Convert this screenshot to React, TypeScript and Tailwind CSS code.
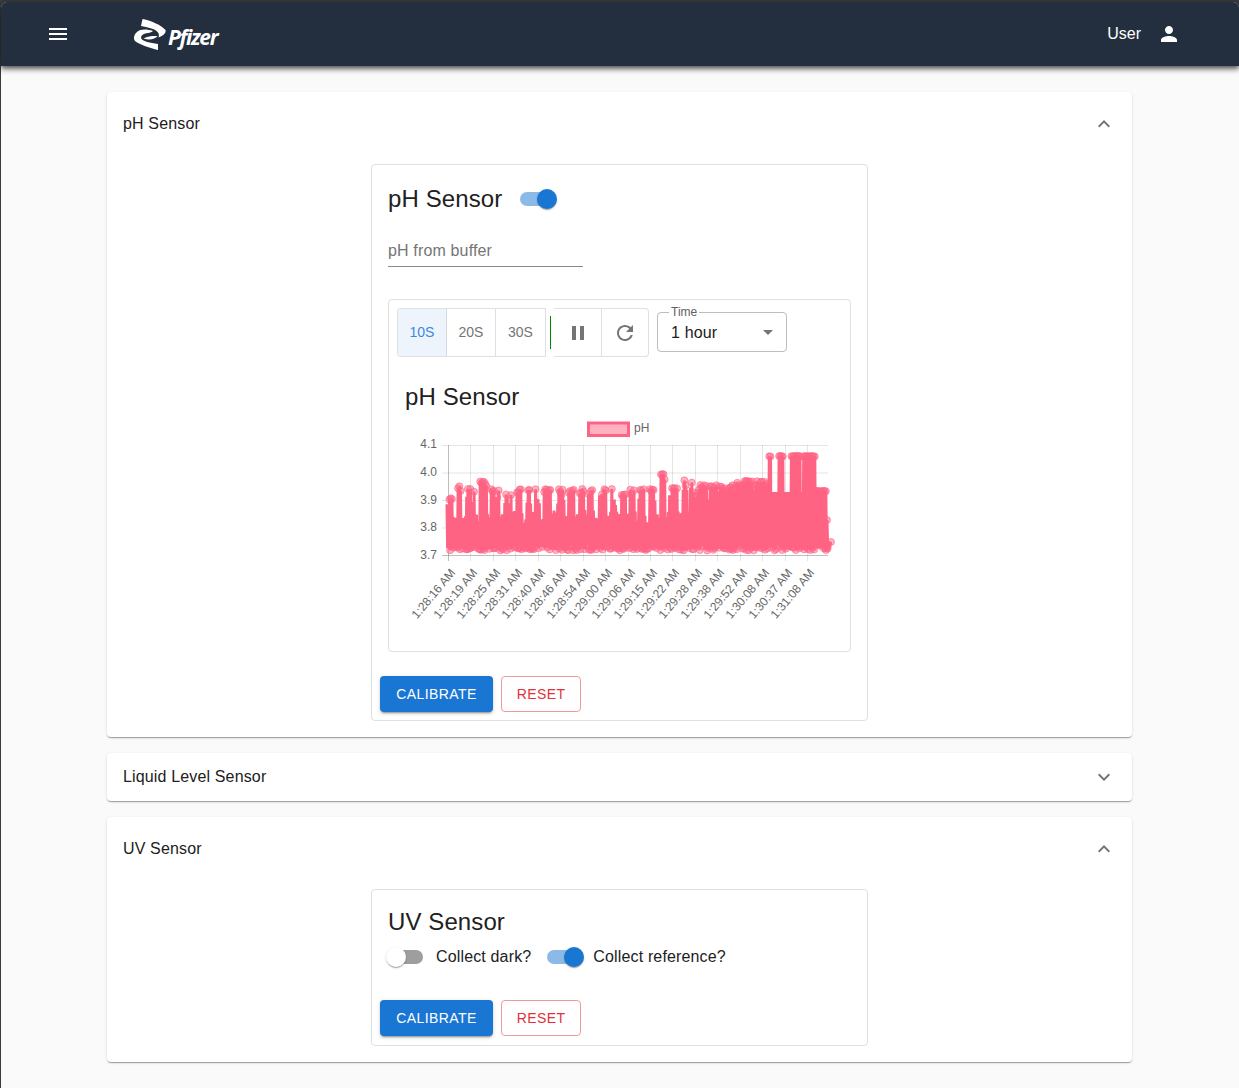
import React from "react";

const Icon = ({ d, className }: { d: string; className?: string }) => (
  <svg viewBox="0 0 24 24" className={className} fill="currentColor" aria-hidden="true">
    <path d={d} />
  </svg>
);

const MENU = "M3 18h18v-2H3v2zm0-5h18v-2H3v2zm0-7v2h18V6H3z";
const PERSON = "M12 12c2.21 0 4-1.79 4-4s-1.79-4-4-4-4 1.79-4 4 1.79 4 4 4zm0 2c-2.67 0-8 1.34-8 4v2h16v-2c0-2.66-5.33-4-8-4z";
const MORE = "M16.59 8.59L12 13.17 7.41 8.59 6 10l6 6 6-6z";
const LESS = "M12 8l-6 6 1.41 1.41L12 10.83l4.59 4.58L18 14z";
const PAUSE = "M6 19h4V5H6v14zm8-14v14h4V5h-4z";
const REFRESH = "M17.65 6.35C16.2 4.9 14.21 4 12 4c-4.42 0-7.99 3.58-7.99 8s3.57 8 7.99 8c3.73 0 6.84-2.55 7.73-6h-2.08c-.82 2.33-3.04 4-5.65 4-3.31 0-6-2.69-6-6s2.69-6 6-6c1.66 0 3.14.69 4.22 1.78L13 11h7V4l-2.35 2.35z";
const ARROW = "M7 10l5 5 5-5z";

const Switch = ({ on }: { on: boolean }) => (
  <span className="relative block w-[58px] h-[38px] shrink-0">
    <span className={`absolute left-[12px] top-[12px] w-[34px] h-[14px] rounded-[7px] ${on ? "bg-[#8cbae8]" : "bg-[#9e9e9e]"}`} />
    <span
      className={`absolute top-[9px] w-[20px] h-[20px] rounded-full shadow-[0_2px_1px_-1px_rgba(0,0,0,0.2),0_1px_1px_0_rgba(0,0,0,0.14),0_1px_3px_0_rgba(0,0,0,0.12)] ${
        on ? "left-[29px] bg-[#1976d2]" : "left-[9px] bg-white"
      }`}
    />
  </span>
);

const Actions = () => (
  <div className="flex gap-2 ml-[-8px]">
    <button className="w-[113px] h-[36px] rounded bg-[#1976d2] text-white text-sm tracking-[0.4px] shadow-[0_3px_1px_-2px_rgba(0,0,0,0.2),0_2px_2px_0_rgba(0,0,0,0.14),0_1px_5px_0_rgba(0,0,0,0.12)]">
      CALIBRATE
    </button>
    <button className="w-[80px] h-[36px] rounded border border-[#ef9a9a] text-[#e0323a] text-sm tracking-[0.4px]">
      RESET
    </button>
  </div>
);

const Accordion = ({ title, open, children }: { title: string; open: boolean; children?: React.ReactNode }) => (
  <section className="bg-white rounded shadow-[0_2px_1px_-1px_rgba(0,0,0,0.2),0_1px_1px_0_rgba(0,0,0,0.14),0_1px_3px_0_rgba(0,0,0,0.12)]">
    <div className={`flex items-center justify-between px-4 ${open ? "h-[64px]" : "h-[48px]"}`}>
      <span className="text-base tracking-[0.15px] text-[#212121]">{title}</span>
      <Icon d={open ? LESS : MORE} className="w-6 h-6 text-[#757575]" />
    </div>
    {children && <div className="px-4 pt-2 pb-4">{children}</div>}
  </section>
);

/* ---- chart data ---- */
let seed = 12345;
const rnd = () => {
  seed = (seed * 1103515245 + 12345) & 0x7fffffff;
  return seed / 0x7fffffff;
};
const SLITS = [772.5, 776.5, 785, 789, 802];
const envelope = (x: number) => {
  if (x < 452) return 498;
  if (x < 458) return 510;
  if (x < 466) return 484;
  if (x < 478) return 489;
  if (x < 487) return 481;
  if (x < 660) return 489;
  if (x < 666) return 474;
  if (x < 680) return 488;
  if (x < 692) return 480;
  if (x < 698) return 492;
  if (x < 735) return 485;
  if (x < 769) return 481;
  if (x < 815) return 456;
  if (x < 827) return 491;
  return 540;
};
const gaps: [number, number][] = [];
for (let x = 452; x < 690; ) {
  const w = 3.4 + rnd() * 2;
  gaps.push([x, x + w]);
  x += w + 3 + rnd() * 6;
}
const inGap = (x: number) => {
  if (x < 690) return gaps.some(([a, b]) => x >= a && x < b);
  if (x >= 769 && x < 815) return SLITS.some((s) => Math.abs(x - s) < 1.7);
  return false;
};
const gapFloor = (x: number) => {
  if (x < 690) return 510 + rnd() * 14;
  return 492;
};
type P = { x: number; y: number; dot: boolean };
const points: P[] = [];
for (let i = 0; i < 620; i++) {
  const x = 447 + i * 0.615;
  if (i % 2 === 1) {
    points.push({ x, y: 544.5 + rnd() * 6, dot: rnd() > 0.3 });
  } else if (inGap(x)) {
    points.push({ x, y: gapFloor(x), dot: false });
  } else if (x < 769 && rnd() > 0.66) {
    points.push({ x, y: envelope(x) + 5 + rnd() * 12, dot: false });
  } else {
    const sol = x >= 769 && x < 827;
    points.push({ x, y: envelope(x) + (sol ? rnd() * 0.6 : rnd() * rnd() * 9), dot: true });
  }
}
[
  [827, 520],
  [826, 548],
  [828, 545],
  [831, 542],
  [826, 550],
].forEach(([x, y]) => points.push({ x, y, dot: true }));
const linePath = points.map((p, i) => `${i ? "L" : "M"}${p.x.toFixed(1)} ${p.y.toFixed(1)}`).join("");

const TICKS = [
  "1:28:16 AM", "1:28:19 AM", "1:28:25 AM", "1:28:31 AM", "1:28:40 AM", "1:28:46 AM",
  "1:28:54 AM", "1:29:00 AM", "1:29:06 AM", "1:29:15 AM", "1:29:22 AM", "1:29:28 AM",
  "1:29:38 AM", "1:29:52 AM", "1:30:08 AM", "1:30:37 AM", "1:31:08 AM",
];
const YT: [string, number, number][] = [
  ["4.1", 445, 448],
  ["4.0", 472.5, 476],
  ["3.9", 500, 504],
  ["3.8", 527.5, 531],
  ["3.7", 555, 559],
];

const Chart = () => (
  <svg viewBox="389 415 461 220" className="block w-[461px] h-[220px]">
    <g fontFamily="'Liberation Sans', Arial, sans-serif" fontSize="12" fill="#666">
      <rect x="588.5" y="423" width="40" height="12.5" fill="rgba(255,99,132,0.5)" stroke="#ff6384" strokeWidth="3" />
      <text x="634" y="432">pH</text>
      {YT.map(([t, y, ty]) => (
        <g key={t}>
          <line x1="442" x2="828" y1={y + 0.5} y2={y + 0.5} stroke={t === "3.7" ? "rgba(0,0,0,0.25)" : "rgba(0,0,0,0.1)"} />
          <text x="437" y={ty} textAnchor="end">{t}</text>
        </g>
      ))}
      {TICKS.map((t, i) => {
        const x = Math.round(448 + i * 22.44);
        return (
          <g key={t}>
            <line x1={x + 0.5} x2={x + 0.5} y1="445" y2="561" stroke={i === 0 ? "rgba(0,0,0,0.25)" : "rgba(0,0,0,0.1)"} />
            <text x={x + 8} y="573" textAnchor="end" transform={`rotate(-50 ${x + 8} 573)`}>{t}</text>
          </g>
        );
      })}
    </g>
    <path d={linePath} fill="none" stroke="#ff6384" strokeWidth="3" strokeLinejoin="bevel" />
    {points.filter((p) => p.dot).map((p, i) => (
      <circle key={i} cx={p.x} cy={p.y} r="3.5" fill="rgba(255,99,132,0.5)" stroke="rgba(255,99,132,0.6)" />
    ))}
  </svg>
);

const Toolbar = () => (
  <div className="flex items-start">
    <div className="flex h-[49px] text-sm text-[#757575] border border-r-0 border-[#dde1e6] rounded-l">
      <span className="w-[49px] pb-[2px] flex items-center justify-center bg-[#edf4fb] text-[#3a8ae0] rounded-l border-r border-[#d3dae2]">10S</span>
      <span className="w-[49px] pb-[2px] flex items-center justify-center border-r border-[#dde1e6]">20S</span>
      <span className="w-[50px] pb-[2px] flex items-center justify-center border-r border-[#dde1e6]">30S</span>
    </div>
    <span className="w-px h-[33px] mt-[8px] ml-[4px] bg-[#008a00]" />
    <div className="flex h-[49px] ml-[3px] text-[#757575] border border-l-0 border-[#e0e0e0] rounded-r">
      <span className="w-[48px] flex items-center justify-center border-r border-[#e0e0e0]">
        <Icon d={PAUSE} className="w-6 h-6" />
      </span>
      <span className="w-[46px] flex items-center justify-center">
        <Icon d={REFRESH} className="w-6 h-6" />
      </span>
    </div>
    <div className="relative w-[130px] h-[40px] mt-[4px] ml-[8px] border border-[#bdbdbd] rounded flex items-center justify-between pl-[13px] pr-[6px]">
      <span className="absolute left-[11px] top-[-7px] bg-white px-[2px] text-xs leading-[13px] text-[#616161]">Time</span>
      <span className="text-base text-[#212121] pt-[1px] tracking-[0.15px]">1 hour</span>
      <Icon d={ARROW} className="w-6 h-6 text-[#757575]" />
    </div>
  </div>
);

const Logo = () => (
  <div className="flex items-start ml-[64px] h-[32px] mt-[2px]">
    <svg viewBox="134 19 33 32" className="w-[33px] h-[32px]" fill="#fff" aria-hidden="true">
      <path d="M142.5 19C152 21 161 25 165.5 30C166.5 33 163 36 158.5 37.5C160 34 158 31 153 29C149 27.5 145 26.5 141 26Z" />
      <path d="M153 31C146 28.5 139 29 136 33C133.5 36 133.5 39 135 41C140 45 150 48 158 50L158 44C150 43 143 41 141.5 39C140 36 143 33.5 148 33C150 32.8 152 32 153 31Z" />
      <path d="M143.5 38.5C148 36 153 35.8 157.5 36C155 39 150 40.5 143.5 38.5Z" />
    </svg>
    <span className="ml-[1px] mt-[5px] text-[21px] leading-[26px] italic font-bold tracking-[-1.3px] text-white font-['Open_Sans',sans-serif]">Pfizer</span>
  </div>
);

export default function App() {
  return (
    <div className="min-h-[1088px] overflow-hidden bg-[#3a3a3a] pt-[2px] pl-px font-['Liberation_Sans',Arial,sans-serif] text-[#212121]">
      <div className="min-h-[1086px] bg-[#fafafa] rounded-t-md">
        <header className="h-[64px] bg-[#232f3e] rounded-t-md flex items-center text-white shadow-[0_2px_4px_-1px_rgba(0,0,0,0.5),0_4px_5px_0_rgba(0,0,0,0.3),0_1px_10px_0_rgba(0,0,0,0.2)]">
          <Icon d={MENU} className="w-6 h-6 ml-[45px]" />
          <Logo />
          <span className="ml-auto text-base">User</span>
          <Icon d={PERSON} className="w-6 h-6 ml-[16px] mr-[58px]" />
        </header>

        <main className="w-[1025px] ml-[106px] pt-[26px] flex flex-col gap-4">
          <Accordion title="pH Sensor" open>
            <div className="w-[497px] mx-auto border border-[#e0e0e0] rounded px-4 pt-[15px] pb-2">
              <div className="flex items-center h-[38px]">
                <h2 className="text-2xl leading-8 tracking-[0.1px]">pH Sensor</h2>
                <span className="ml-[6px]"><Switch on /></span>
              </div>
              <div className="w-[195px] mt-[16px] h-[33px] border-b border-[#8a8a8a] text-base tracking-[0.15px] text-[#757575] leading-[34px]">
                pH from buffer
              </div>
              <div className="mt-[32px] w-[463px] h-[353px] border border-[#e0e0e0] rounded-sm px-2 pt-2">
                <Toolbar />
                <h3 className="text-2xl leading-8 mt-[24px] ml-2 tracking-[0.1px]">pH Sensor</h3>
                <div className="ml-[-8px] mt-[2px]"><Chart /></div>
              </div>
              <div className="mt-[24px]"><Actions /></div>
            </div>
          </Accordion>

          <Accordion title="Liquid Level Sensor" open={false} />

          <Accordion title="UV Sensor" open>
            <div className="w-[497px] mx-auto border border-[#e0e0e0] rounded px-4 pt-4 pb-[9px]">
              <h2 className="text-2xl leading-8 tracking-[0.1px]">UV Sensor</h2>
              <div className="flex items-center h-[38px] ml-[-11px] text-base tracking-[0.15px]">
                <Switch on={false} />
                <span className="ml-px mr-[4px]">Collect dark?</span>
                <Switch on />
                <span>Collect reference?</span>
              </div>
              <div className="mt-[24px]"><Actions /></div>
            </div>
          </Accordion>
        </main>
      </div>
    </div>
  );
}
